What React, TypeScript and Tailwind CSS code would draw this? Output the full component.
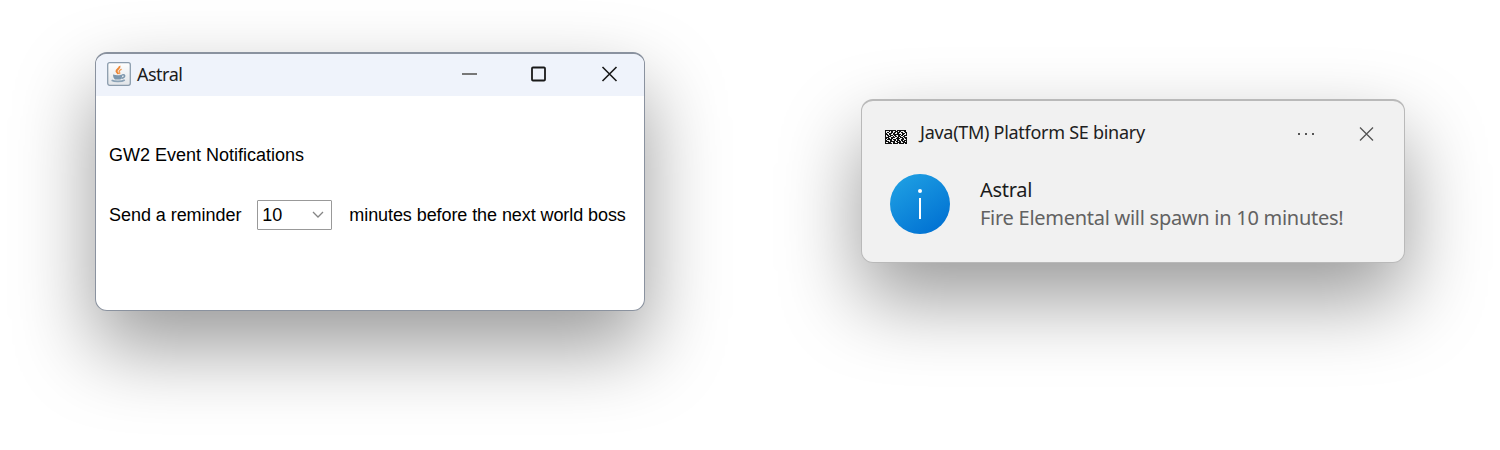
const glyph = [
  '1111111111101111111110',
  '1000101100111011000110',
  '1011001101101110110011',
  '1100111011001100011101',
  '1110110011111111011001',
  '1011011101100110110111',
  '1001110010110111001100',
  '1111001111001101110111',
  '1101101100011110011011',
  '1011111011101100111001',
  '1100011001101110110111',
  '1111011111011011011101',
  '1001110011001111001111',
  '1111111011111011111011',
];

function JavaIcon() {
  return (
    <svg width="24" height="24" viewBox="0 0 24 24" fill="none" className="mb-[3px] shrink-0">
      <defs>
        <linearGradient id="tile" x1="0" y1="0" x2="0" y2="1">
          <stop offset="0" stopColor="#ffffff" />
          <stop offset="1" stopColor="#e1e4e8" />
        </linearGradient>
      </defs>
      <rect x="0.7" y="0.7" width="22.6" height="22.6" rx="2" fill="url(#tile)" stroke="#8b9cad" strokeWidth="1.3" />
      <path d="M12.500 4c1 2.200-3.500 3.600-3 5.400.3.900 1.500 1.300 1.600 2.700" stroke="#ee8735" strokeWidth="2" />
      <path d="M14.600 7.200c-1.700.9-2.800 1.500-2.300 2.700.3.800.8 1.100.1 2.300" stroke="#f2a05c" strokeWidth="1.500" />
      <path d="M6 12.600c2.800 1 7 1 9.300 0 0 2.200-.7 3.900-1.800 4.900H8c-1.300-.8-2-2.600-2-4.900Z" fill="#7d97ad" />
      <path d="M15.200 13c3.600-1 3.200 2.700-.9 3.200" stroke="#7d97ad" strokeWidth="1.500" />
      <path d="M4.600 18.300c3.200 1.700 10 1.500 13.200-.4" stroke="#8ba2b6" strokeWidth="1.700" />
    </svg>
  );
}

function AppWindow() {
  return (
    <section className="mt-[52px] flex h-[259px] w-[550px] flex-col overflow-hidden rounded-[12px] border-x border-b border-t-2 border-[#8a929f] bg-white font-['Liberation_Sans',sans-serif] text-[18px] leading-5 text-black shadow-[0_36px_80px_rgba(0,0,0,0.4)]">
      <header className="flex h-[42px] shrink-0 items-center bg-[#eff3fb] pl-[11px]">
        <JavaIcon />
        <span className="mb-[3px] ml-[6px] font-['Noto_Sans',sans-serif] text-[18px] tracking-[-0.5px] text-[#1b1b1b]">Astral</span>
        <svg width="160" height="20" viewBox="0 0 160 20" fill="none" stroke="#191919" className="mb-[2px] ml-auto mr-[26px]">
          <path d="M4 10h15" stroke="#777" strokeWidth="2" />
          <rect x="74" y="3.500" width="13" height="13" rx="1" strokeWidth="1.8" />
          <path d="m144.500 3 14 14m0-14-14 14" strokeWidth="1.600" />
        </svg>
      </header>
      <main className="flex flex-col items-start pl-[13px] pt-[49px]">
        <p>GW2 Event Notifications</p>
        <div className="mt-[35px] flex items-center">
          <span className="tracking-[-0.05px]">Send a reminder</span>
          <button className="ml-[16px] flex h-[30px] w-[75px] items-center justify-between rounded-[1px] border border-[#999] pl-[4px] pr-[7px] tracking-[-0.2px]">
            10
            <svg width="12" height="8" viewBox="0 0 12 8" fill="none" stroke="#858585" strokeWidth="1.300">
              <path d="m1 1 5 5 5-5" />
            </svg>
          </button>
          <span className="ml-[17px] tracking-[-0.08px]">minutes before the next world boss</span>
        </div>
      </main>
    </section>
  );
}

function Toast() {
  return (
    <section className="mt-[99px] flex h-[164px] w-[544px] flex-col rounded-[12px] border-x border-b border-t-2 border-[#b9b9b9] bg-[#f1f1f1] font-['Noto_Sans',sans-serif] shadow-[0_36px_80px_rgba(0,0,0,0.4)]">
      <header className="flex h-[64px] items-center pl-[23px] pr-[28px] pt-[1px]">
        <svg width="22" height="14" viewBox="0 0 22 14" shapeRendering="crispEdges" className="mt-[7px]">
          {glyph.flatMap((row, y) =>
            [...row].map((cell, x) => (cell === '1' ? <rect key={`${x}-${y}`} x={x} y={y} width="1" height="1" fill="#111" /> : null)),
          )}
        </svg>
        <span className="mb-[2px] ml-[13px] text-[18px] tracking-[-0.28px] text-[#202020]">Java(TM) Platform SE binary</span>
        <svg width="78" height="16" viewBox="0 0 78 16" className="ml-auto">
          <g fill="#555">
            <rect x="0" y="7" width="2" height="2" />
            <rect x="7" y="7" width="2" height="2" />
            <rect x="14" y="7" width="2" height="2" />
          </g>
          <path d="m62 1.500 13 13m0-13-13 13" fill="none" stroke="#555" strokeWidth="1.300" />
        </svg>
      </header>
      <div className="flex pl-[28px] pt-[9px]">
        <svg width="60" height="60" viewBox="0 0 60 60">
          <defs>
            <linearGradient id="info" x1="0.15" y1="0.1" x2="0.75" y2="0.95">
              <stop offset="0" stopColor="#1d9de2" />
              <stop offset="1" stopColor="#0273d3" />
            </linearGradient>
          </defs>
          <circle cx="30" cy="30" r="30" fill="url(#info)" />
          <circle cx="30" cy="17" r="2" fill="#fff" />
          <path d="M30 24v21" stroke="#fff" strokeWidth="2" />
        </svg>
        <div className="ml-[30px] mt-[2px] text-[20px] leading-[28px] tracking-[-0.27px]">
          <p className="text-[#1b1b1b]">Astral</p>
          <p className="text-[#626262]">Fire Elemental will spawn in 10 minutes!</p>
        </div>
      </div>
    </section>
  );
}

export default function App() {
  return (
    <div className="flex h-[450px] w-[1500px] items-start gap-[216px] overflow-hidden bg-white pl-[95px]">
      <AppWindow />
      <Toast />
    </div>
  );
}
